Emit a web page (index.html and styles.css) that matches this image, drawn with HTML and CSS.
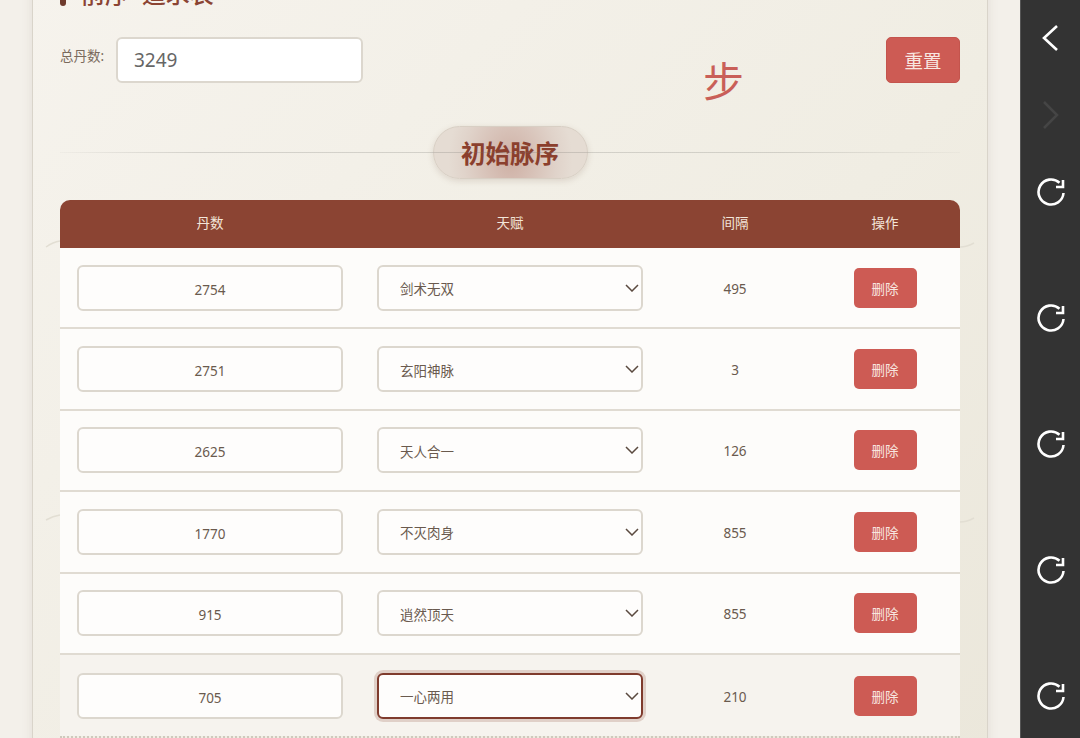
FILE: index.html
```
<!DOCTYPE html>
<html lang="zh-CN">
<head>
<meta charset="UTF-8">
<title>前序·追求表</title>
<link rel="stylesheet" href="styles.css">
</head>
<body>
<svg class="defs" width="0" height="0">
	<symbol id="reload" viewBox="0 0 28 28">
		<path d="M26.5 15A12.5 12.5 0 1 1 22.5 4.8" />
		<path d="M26 2V9H19" />
	</symbol>
</svg>
<div class="main">
	<div class="card">
		<h2 class="title"><span>前序· 追求表</span></h2>
		<div class="top">
			<label class="total-label">总丹数:</label>
			<input class="total-input" type="text" value="3249">
			<span class="step">步</span>
			<a href="javascript:;" class="btn btn-reset">重置</a>
		</div>
		<div class="divider"><span class="pill">初始脉序</span></div>
		<div class="table-wrap">
			<svg class="waves" width="930" height="300" viewBox="0 0 930 300">
				<path d="M1 47Q8 42 15 41" />
				<path d="M1 320Q8 316 15 315" />
				<path d="M915 47Q922 47 929 43" />
				<path d="M915 322Q922 322 929 318" />
			</svg>
			<div class="table">
				<div class="row row-head">
					<div>丹数</div>
					<div>天赋</div>
					<div>间隔</div>
					<div>操作</div>
				</div>
				<div class="row">
					<div><input class="field" type="text" value="2754"></div>
					<div><select class="field-select"><option>剑术无双</option></select></div>
					<div class="gap">495</div>
					<div><a href="javascript:;" class="btn btn-del">删除</a></div>
				</div>
				<div class="row">
					<div><input class="field" type="text" value="2751"></div>
					<div><select class="field-select"><option>玄阳神脉</option></select></div>
					<div class="gap">3</div>
					<div><a href="javascript:;" class="btn btn-del">删除</a></div>
				</div>
				<div class="row">
					<div><input class="field" type="text" value="2625"></div>
					<div><select class="field-select"><option>天人合一</option></select></div>
					<div class="gap">126</div>
					<div><a href="javascript:;" class="btn btn-del">删除</a></div>
				</div>
				<div class="row">
					<div><input class="field" type="text" value="1770"></div>
					<div><select class="field-select"><option>不灭肉身</option></select></div>
					<div class="gap">855</div>
					<div><a href="javascript:;" class="btn btn-del">删除</a></div>
				</div>
				<div class="row">
					<div><input class="field" type="text" value="915"></div>
					<div><select class="field-select"><option>逍然顶天</option></select></div>
					<div class="gap">855</div>
					<div><a href="javascript:;" class="btn btn-del">删除</a></div>
				</div>
				<div class="row row-hover">
					<div><input class="field" type="text" value="705"></div>
					<div><select class="field-select active"><option>一心两用</option></select></div>
					<div class="gap">210</div>
					<div><a href="javascript:;" class="btn btn-del">删除</a></div>
				</div>
			</div>
		</div>
	</div>
</div>
<nav class="side">
	<a href="javascript:;" class="side-btn"><svg width="28" height="28" viewBox="0 0 28 28"><path d="M20 2 7 14 20 26" /></svg></a>
	<a href="javascript:;" class="side-btn off"><svg width="28" height="28" viewBox="0 0 28 28"><path d="M7 1 20 14 7 27" /></svg></a>
	<a href="javascript:;" class="side-btn"><svg width="28" height="28"><use href="#reload" /></svg></a>
	<a href="javascript:;" class="side-btn"><svg width="28" height="28"><use href="#reload" /></svg></a>
	<a href="javascript:;" class="side-btn"><svg width="28" height="28"><use href="#reload" /></svg></a>
	<a href="javascript:;" class="side-btn"><svg width="28" height="28"><use href="#reload" /></svg></a>
	<a href="javascript:;" class="side-btn"><svg width="28" height="28"><use href="#reload" /></svg></a>
</nav>
</body>
</html>
```

FILE: styles.css
```
* {
	box-sizing: border-box;
}
html,
body {
	margin: 0;
	height: 738px;
	overflow: hidden;
}
body {
	display: flex;
	background: #f3f0ea;
	font-family: "Noto Sans", "Noto Sans CJK SC", sans-serif;
	color: #6a5a4e;
	font-size: 13.5px;
}
a {
	text-decoration: none;
}
.defs {
	display: none;
}
.main {
	flex: 1;
	padding: 0 32px;
}
.card {
	margin-top: -37px;
	height: 800px;
	padding: 0 27px;
	border: 1px solid #d9d4ca;
	background: linear-gradient(135deg, #f6f3ed 0%, #f0ede3 60%, #ebe7db 100%);
	box-shadow: 0 0 10px rgba(120, 100, 80, .12);
}
.title {
	display: flex;
	align-items: flex-end;
	gap: 15px;
	margin: 0 0 29px;
	height: 44px;
	font-size: 24px;
	line-height: 28px;
	font-weight: 500;
	color: #8b4433;
}
.title::before {
	content: "";
	width: 6px;
	height: 28px;
	margin-bottom: 2px;
	border-radius: 3px;
	background: #6e3a2c;
}
.top {
	display: flex;
	align-items: flex-start;
	height: 46px;
}
.total-label {
	width: 45px;
	margin: 9px 11px 0 0;
	line-height: 20px;
	font-size: 13.5px;
	white-space: nowrap;
	color: #7a6a5c;
}
.total-input {
	width: 247px;
	height: 46px;
	padding: 0 16px;
	border: 2px solid #dcd7ce;
	border-radius: 6px;
	background: #fff;
	font: 19px "Noto Sans", sans-serif;
	color: #666;
	outline: none;
}
.step {
	margin: 19px 142px 0 auto;
	font-size: 41px;
	line-height: 50px;
	color: #c95f58;
}
.btn {
	display: flex;
	align-items: center;
	justify-content: center;
	background: #cd5b54;
	color: #f8e6e0;
}
.btn-reset {
	width: 74px;
	height: 46px;
	border-radius: 5px;
	border: 1px solid #c4544d;
	font-size: 18.5px;
}
.divider {
	position: relative;
	display: flex;
	justify-content: center;
	margin: 43px 0 21px;
}
.divider::before {
	content: "";
	position: absolute;
	left: 0;
	right: 0;
	top: 26px;
	height: 1px;
	background: linear-gradient(90deg, rgba(110, 110, 105, .04), rgba(110, 110, 105, .24) 15%, rgba(110, 110, 105, .24) 80%, rgba(110, 110, 105, .04));
}
.pill {
	width: 155px;
	height: 53px;
	border: 1px solid #d8cfc4;
	border-radius: 27px;
	background: radial-gradient(ellipse 62px 80px at 50% 65%, #ceafa4, #e0d3ca 75%, #e5dcd3);
	box-shadow: 0 2px 6px rgba(120, 90, 70, .18);
	font-size: 24.5px;
	font-weight: 700;
	line-height: 53px;
	text-align: center;
	color: #8b3f2d;
}
.table-wrap {
	position: relative;
}
.waves {
	position: absolute;
	left: -15px;
	top: 0;
	overflow: visible;
}
.waves path {
	fill: none;
	stroke: #e2ded3;
	stroke-width: 1.5;
}
.table {
	position: relative;
	border-radius: 10px 10px 0 0;
	overflow: hidden;
	border-bottom: 2px dotted #cfc9bd;
}
.row {
	display: grid;
	grid-template-columns: 2fr 2fr 1fr 1fr;
	align-items: center;
	height: 81.4px;
	background: #fdfcfa;
	border-bottom: 2px solid #e0dbd2;
	text-align: center;
}
.row > div {
	padding: 0 17px;
}
.row > .gap {
	padding-top: 2px;
}
.row-head {
	height: 48px;
	padding-bottom: 4px;
	background: #8b4433;
	border-bottom: 0;
	color: #f3e6da;
}
.row-hover {
	background: #f6f3ee;
	border-bottom: 0;
}
.field,
.field-select {
	display: block;
	width: 100%;
	height: 46px;
	border: 2px solid #dcd7ce;
	border-radius: 6px;
	background-color: #fefdfc;
	font: 13.5px "Noto Sans", "Noto Sans CJK SC", sans-serif;
	color: #6a5a4e;
	outline: none;
}
.field {
	padding-top: 5px;
	text-align: center;
}
.field-select {
	padding: 3px 30px 0 21px;
	appearance: none;
	background-image: url("data:image/svg+xml,%3Csvg xmlns='http://www.w3.org/2000/svg' width='14' height='8'%3E%3Cpath d='M1 1l6 6 6-6' fill='none' stroke='%235a4a3f' stroke-width='1.5'/%3E%3C/svg%3E");
	background-repeat: no-repeat;
	background-position: right 2px center;
}
.field-select.active {
	border-color: #7f3b2d;
	box-shadow: 0 0 0 3px rgba(139, 68, 51, .2);
}
.btn-del {
	width: 63px;
	height: 40px;
	margin: 0 auto;
	border-radius: 5px;
	font-size: 13.5px;
}
.side {
	display: flex;
	flex-direction: column;
	width: 60px;
	height: 738px;
	background: #333;
	border-left: 1px solid #555;
}
.side-btn {
	display: flex;
	align-items: center;
	justify-content: center;
	height: 76.5px;
	flex: none;
}
.side-btn + .side-btn + .side-btn {
	margin-top: 1px;
}
.side-btn + .side-btn + .side-btn + .side-btn {
	margin-top: 49.5px;
}
.side-btn svg {
	fill: none;
	stroke: #fff;
	stroke-width: 2.6;
}
.side-btn.off svg {
	stroke: #454545;
}
```
